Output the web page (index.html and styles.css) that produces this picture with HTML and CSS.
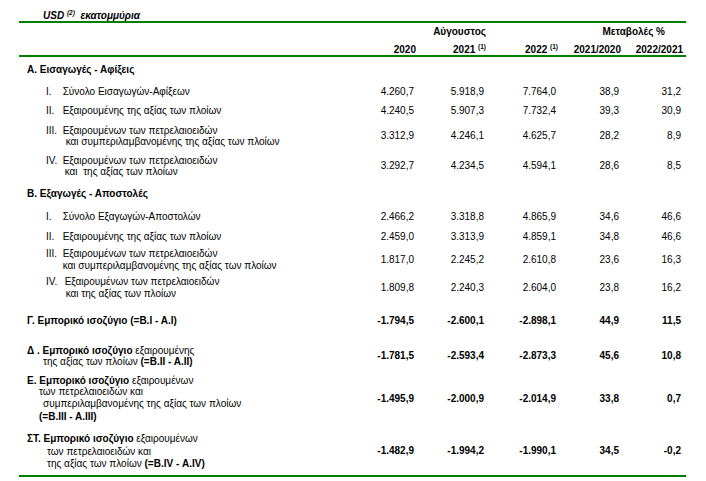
FILE: index.html
```html
<!DOCTYPE html>
<html lang="el">
<head>
  <meta charset="UTF-8">
  <title>Εμπορικό ισοζύγιο | Αύγουστος</title>
  <meta name="viewport" content="width=device-width, initial-scale=1.0">
  <link rel="stylesheet" href="styles.css">
</head>
<body>
  <div class="unit">USD <sup>(2)</sup>&nbsp; εκατομμύρια</div>
  <table class="trade">
    <colgroup>
      <col class="c-label">
      <col class="c-2020">
      <col class="c-2021">
      <col class="c-2022">
      <col class="c-ch1">
      <col class="c-ch2">
    </colgroup>
    <thead>
      <tr class="head-top">
        <th></th>
        <th></th>
        <th class="month">Αύγουστος</th>
        <th></th>
        <th colspan="2" class="changes">Μεταβολές %</th>
      </tr>
      <tr class="head-years">
        <th></th>
        <th>2020</th>
        <th>2021 <sup>(1)</sup></th>
        <th>2022 <sup>(1)</sup></th>
        <th>2021/2020</th>
        <th>2022/2021</th>
      </tr>
    </thead>
    <tbody>
      <tr class="pt7">
        <td class="section">Α. Εισαγωγές - Αφίξεις</td>
        <td></td><td></td><td></td><td></td><td></td>
      </tr>
      <tr class="pt10">
        <td><div class="item"><span class="rn">I.</span><span class="txt">Σύνολο Εισαγωγών-Αφίξεων</span></div></td>
        <td class="n">4.260,7</td><td class="n">5.918,9</td><td class="n">7.764,0</td><td class="n">38,9</td><td class="n">31,2</td>
      </tr>
      <tr class="pt8">
        <td><div class="item"><span class="rn">II.</span><span class="txt">Εξαιρουμένης της αξίας των πλοίων</span></div></td>
        <td class="n">4.240,5</td><td class="n">5.907,3</td><td class="n">7.732,4</td><td class="n">39,3</td><td class="n">30,9</td>
      </tr>
      <tr class="pt8">
        <td><div class="item"><span class="rn">III.</span><span class="txt">Εξαιρουμένων των πετρελαιοειδών<span class="ln in3">και συμπεριλαμβανομένης της αξίας των πλοίων</span></span></div></td>
        <td class="n">3.312,9</td><td class="n">4.246,1</td><td class="n">4.625,7</td><td class="n">28,2</td><td class="n">8,9</td>
      </tr>
      <tr class="pt7">
        <td><div class="item"><span class="rn">IV.</span><span class="txt">Εξαιρουμένων των πετρελαιοειδών<span class="ln in2">και&nbsp; της αξίας των πλοίων</span></span></div></td>
        <td class="n">3.292,7</td><td class="n">4.234,5</td><td class="n">4.594,1</td><td class="n">28,6</td><td class="n">8,5</td>
      </tr>

      <tr class="pt10">
        <td class="section">Β. Εξαγωγές - Αποστολές</td>
        <td></td><td></td><td></td><td></td><td></td>
      </tr>
      <tr class="pt12">
        <td><div class="item"><span class="rn">I.</span><span class="txt">Σύνολο Εξαγωγών-Αποστολών</span></div></td>
        <td class="n">2.466,2</td><td class="n">3.318,8</td><td class="n">4.865,9</td><td class="n">34,6</td><td class="n">46,6</td>
      </tr>
      <tr class="pt8">
        <td><div class="item"><span class="rn">II.</span><span class="txt">Εξαιρουμένης της αξίας των πλοίων</span></div></td>
        <td class="n">2.459,0</td><td class="n">3.313,9</td><td class="n">4.859,1</td><td class="n">34,8</td><td class="n">46,6</td>
      </tr>
      <tr class="pt6">
        <td><div class="item"><span class="rn">III.</span><span class="txt">Εξαιρουμένων των πετρελαιοειδών<span class="ln">και συμπεριλαμβανομένης της αξίας των πλοίων</span></span></div></td>
        <td class="n">1.817,0</td><td class="n">2.245,2</td><td class="n">2.610,8</td><td class="n">23,6</td><td class="n">16,3</td>
      </tr>
      <tr class="pt5">
        <td><div class="item"><span class="rn">IV.</span><span class="txt in2">Εξαιρουμένων των πετρελαιοειδών<span class="ln in1">και της αξίας των πλοίων</span></span></div></td>
        <td class="n">1.809,8</td><td class="n">2.240,3</td><td class="n">2.604,0</td><td class="n">23,8</td><td class="n">16,2</td>
      </tr>

      <tr class="pt16 total">
        <td class="section">Γ. Εμπορικό ισοζύγιο (=Β.Ι - Α.Ι)</td>
        <td class="n">-1.794,5</td><td class="n">-2.600,1</td><td class="n">-2.898,1</td><td class="n">44,9</td><td class="n">11,5</td>
      </tr>
      <tr class="pt18 total">
        <td class="label">
          <b>Δ . Εμπορικό ισοζύγιο</b> εξαιρουμένης
          <span class="ln in16">της αξίας των πλοίων <b>(=Β.ΙΙ - Α.ΙΙ)</b></span>
        </td>
        <td class="n">-1.781,5</td><td class="n">-2.593,4</td><td class="n">-2.873,3</td><td class="n">45,6</td><td class="n">10,8</td>
      </tr>
      <tr class="pt7 total">
        <td class="label">
          <b>Ε. Εμπορικό ισοζύγιο</b> εξαιρουμένων
          <span class="ln in12">των πετρελαιοειδών και</span>
          <span class="ln in16">συμπεριλαμβανομένης της αξίας των πλοίων</span>
          <span class="ln in12 lift"><b>(=Β.ΙΙΙ - Α.ΙΙΙ)</b></span>
        </td>
        <td class="n">-1.495,9</td><td class="n">-2.000,9</td><td class="n">-2.014,9</td><td class="n">33,8</td><td class="n">0,7</td>
      </tr>
      <tr class="pt10 total last">
        <td class="label">
          <b>ΣΤ. Εμπορικό ισοζύγιο</b> εξαιρουμένων
          <span class="ln in20 lift">των πετρελαιοειδών και</span>
          <span class="ln in20">της αξίας των πλοίων <b>(=Β.ΙV - Α.ΙV)</b></span>
        </td>
        <td class="n">-1.482,9</td><td class="n">-1.994,2</td><td class="n">-1.990,1</td><td class="n">34,5</td><td class="n">-0,2</td>
      </tr>
    </tbody>
  </table>
</body>
</html>
```

FILE: styles.css
```css
html, body {
  margin: 0;
  padding: 0;
  background-color: #fff;
  color: #000;
  font-family: 'Liberation Sans', Arial, Helvetica, sans-serif;
  font-size: 10px;
}
sup {
  font-size: 6.5px;
  line-height: 0;
  vertical-align: 4px;
  font-weight: bold;
}
.unit {
  margin: 9px 0 0 43px;
  height: 12px;
  line-height: 13px;
  font-weight: bold;
  font-style: italic;
}
.trade {
  margin-left: 19px;
  width: 667px;
  table-layout: fixed;
  border-collapse: separate;
  border-spacing: 0;
  border-top: 2px solid #008000;
  border-bottom: 2px solid #008000;
}
.c-label { width: 331px; }
.c-2020 { width: 66px; }
.c-2021 { width: 70px; }
.c-2022 { width: 72px; }
.c-ch1 { width: 63px; }
.c-ch2 { width: 65px; }
th {
  padding: 0;
  font-weight: bold;
  text-align: right;
  white-space: nowrap;
  line-height: 12px;
}
.head-top th {
  height: 18px;
  vertical-align: middle;
}
.head-years th {
  height: 14px;
  line-height: 10px;
  vertical-align: bottom;
  border-bottom: 2px solid #008000;
}
.head-years th:last-child {
  padding-right: 3px;
}
.changes {
  padding-right: 21px;
}
td {
  padding: 0;
  vertical-align: middle;
  line-height: 11.5px;
}
.section {
  padding-left: 8px;
  font-weight: bold;
  white-space: nowrap;
}
.label {
  padding-left: 8px;
}
.item {
  display: flex;
  padding-left: 27px;
}
.rn {
  width: 16.7px;
  flex-shrink: 0;
}
.ln {
  display: block;
}
.lift {
  margin-top: 2px;
}
.in1 { padding-left: 1px; }
.in2 { padding-left: 2px; }
.in3 { padding-left: 3px; }
.in12 { padding-left: 12px; }
.in16 { padding-left: 16px; }
.in20 { padding-left: 20px; }
.n {
  text-align: right;
  padding-right: 2px;
  white-space: nowrap;
}
.n:last-child {
  padding-right: 5px;
}
.total .n {
  font-weight: bold;
}
.pt5 td { padding-top: 5px; }
.pt6 td { padding-top: 6px; }
.pt7 td { padding-top: 7px; }
.pt8 td { padding-top: 8px; }
.pt10 td { padding-top: 10px; }
.pt12 td { padding-top: 12px; }
.pt16 td { padding-top: 16px; }
.pt18 td { padding-top: 18px; }
.last td { padding-bottom: 6px; }
```
